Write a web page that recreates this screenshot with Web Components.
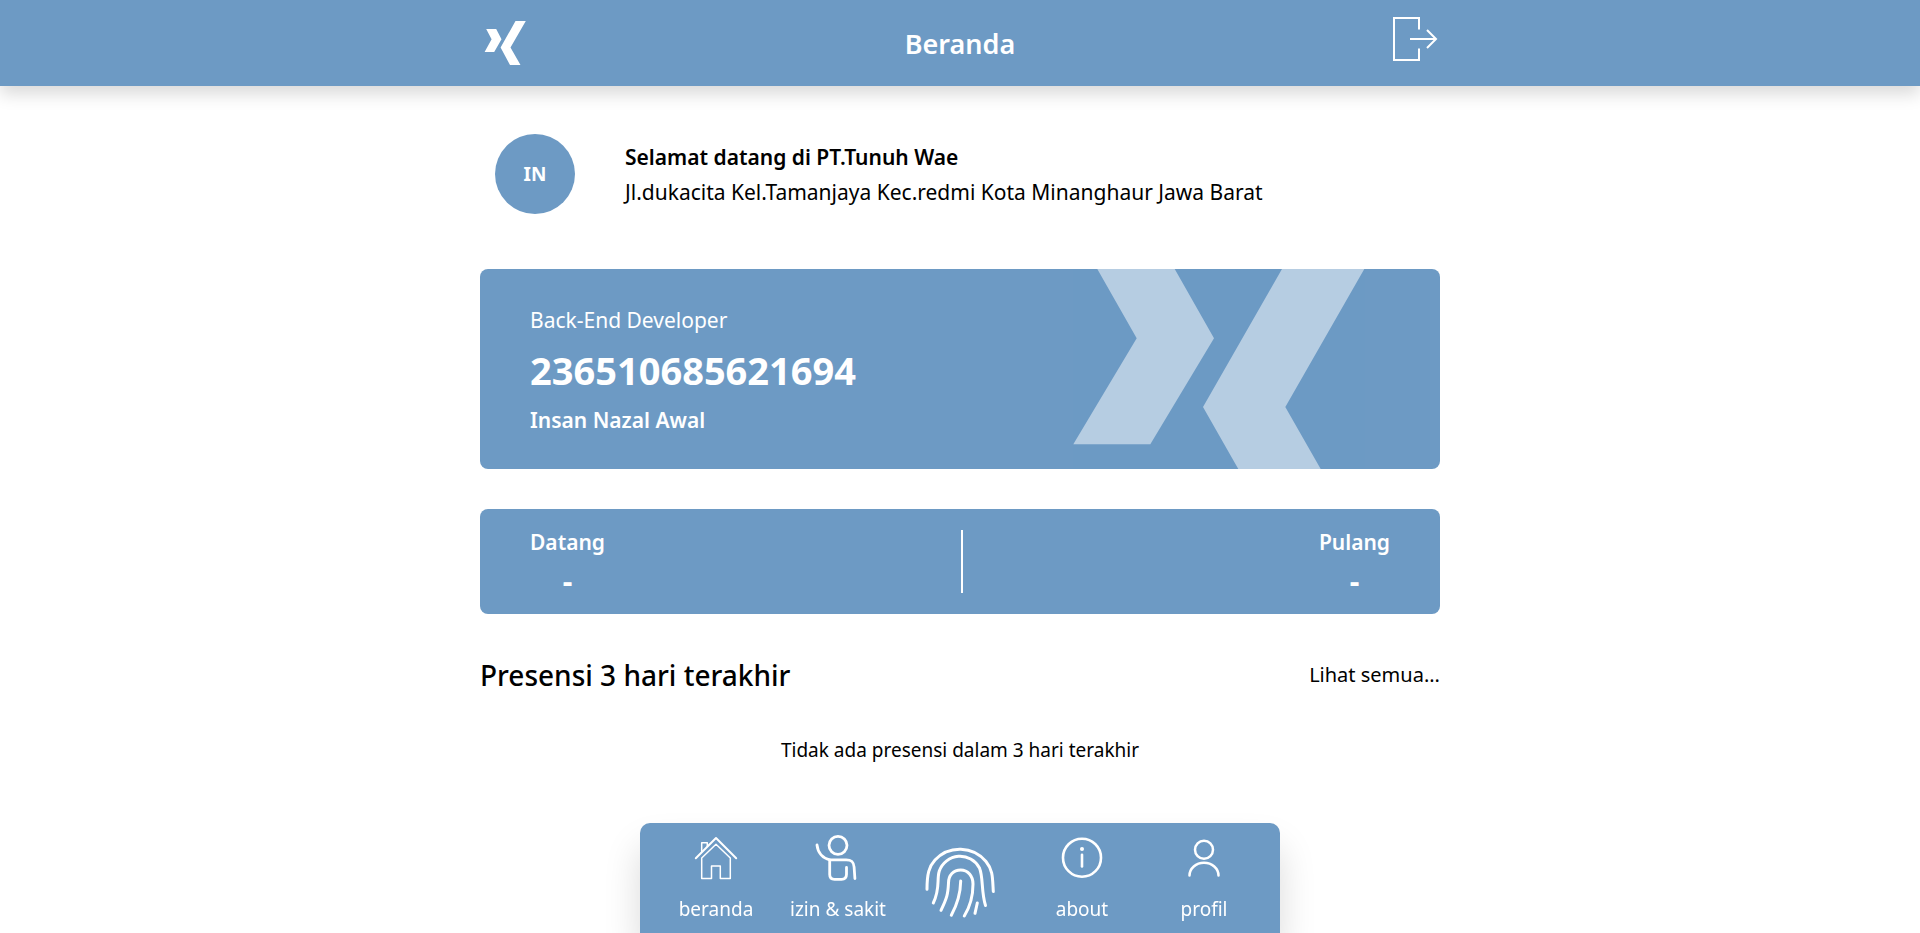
<!DOCTYPE html>
<html lang="id">
<head>
<meta charset="utf-8">
<meta name="viewport" content="width=device-width, initial-scale=1">
<title>Beranda</title>
<style>
  :root {
    --brand: #6d9ac4;
    --shadow: 0 8px 16px rgba(0, 0, 0, .15);
    --shadow-large: 0 24px 36px rgba(0, 0, 0, .15);
    --page-width: 960px;
  }
  body {
    margin: 0;
    background: #fff;
    color: #000;
    font: 400 21px/35px "Noto Sans", "Open Sans", sans-serif;
  }
</style>
</head>
<body>
<home-page></home-page>

<script>
const define = (name, html) => {
  const template = document.createElement('template');
  template.innerHTML = html;
  customElements.define(name, class extends HTMLElement {
    constructor() {
      super();
      this.attachShadow({ mode: 'open' }).append(template.content.cloneNode(true));
    }
  });
};

define('brand-mark', `
  <style>
    :host { display: block; }
    svg { display: block; width: 50px; height: 50px; fill: #fff; }
  </style>
  <svg viewBox="0 0 50 50" aria-hidden="true">
    <path d="M6.2 11h10l5.3 10.3L14.2 34H4.6l7-12.7zM35.5 3h10.3L30.5 29.6 40.5 47H30L20.6 29.6z"/>
  </svg>`);

define('app-header', `
  <style>
    :host { display: block; background: var(--brand); box-shadow: var(--shadow); color: #fff; }
    header {
      display: grid; grid-template-columns: 50px 1fr 50px; align-items: center;
      max-width: var(--page-width); margin: 0 auto; padding: 18px 0;
    }
    h1 { margin: 0; padding-top: 2px; font-size: 27px; line-height: 48px; font-weight: 600; text-align: center; }
    button { display: block; border: 0; padding: 0; background: none; color: inherit; cursor: pointer; }
    svg { display: block; width: 50px; height: 50px; overflow: visible; fill: none; stroke: currentColor; stroke-width: 2; }
  </style>
  <header>
    <brand-mark></brand-mark>
    <h1><slot></slot></h1>
    <button type="button" aria-label="Keluar">
      <svg viewBox="0 0 50 50" aria-hidden="true">
        <path d="M29 11.5V0H4v42h25V30.5"/>
        <path d="M20 21h26M37 12l9 9-9 9"/>
      </svg>
    </button>
  </header>`);

define('welcome-banner', `
  <style>
    :host { display: flex; align-items: center; gap: 50px; padding: 0 15px; }
    .avatar {
      flex: none; display: grid; place-items: center; width: 80px; height: 80px;
      border-radius: 50%; background: var(--brand); color: #fff; font-size: 19px; font-weight: 700;
    }
    .text { padding-top: 2px; }
    h2, p { margin: 0; font-size: 21px; line-height: 35px; }
    h2 { font-weight: 600; }
    p { font-weight: 400; }
  </style>
  <div class="avatar"><slot name="initials"></slot></div>
  <div class="text">
    <h2><slot name="title"></slot></h2>
    <p><slot name="address"></slot></p>
  </div>`);

define('employee-card', `
  <style>
    :host {
      display: flex; justify-content: space-between; align-items: center;
      padding: 0 50px; border-radius: 8px; background: var(--brand); color: #fff; overflow: hidden;
    }
    .info { display: grid; gap: 10px; padding-top: 2px; }
    p { margin: 0; line-height: 30px; }
    .id { font-size: 38px; line-height: 50px; font-weight: 700; }
    .name { font-weight: 600; }
    svg { display: block; width: 325px; height: 200px; fill: #fff; opacity: .5; }
  </style>
  <div class="info">
    <p><slot name="role"></slot></p>
    <p class="id"><slot name="id"></slot></p>
    <p class="name"><slot name="name"></slot></p>
  </div>
  <svg viewBox="0 0 325 200" aria-hidden="true">
    <path d="M32.3 0h77.4L149 69.3 85.3 175.3H8.3L71.7 69.3z"/>
    <path d="M217 0h82.3l-79 138 35.4 62h-82.4L138 138z"/>
  </svg>`);

define('attendance-today', `
  <style>
    :host {
      display: flex; justify-content: space-between; align-items: center;
      padding: 12px 50px 13px; border-radius: 8px; background: var(--brand); color: #fff;
      font-weight: 600; text-align: center;
    }
    dl, dt, dd { margin: 0; }
    dl { padding-bottom: 2px; }
    dt { line-height: 42px; }
    dd { font-size: 30px; font-weight: 700; line-height: 36px; }
    hr { width: 2px; height: 63px; margin: 0; border: 0; background: #fff; }
  </style>
  <dl><dt>Datang</dt><dd><slot name="in"></slot></dd></dl>
  <hr>
  <dl><dt>Pulang</dt><dd><slot name="out"></slot></dd></dl>`);

define('recent-attendance', `
  <style>
    :host { display: block; }
    header { display: flex; justify-content: space-between; align-items: center; line-height: 40px; }
    h2 { margin: 0; font-size: 28px; font-weight: 500; }
    a { font-size: 20px; color: inherit; text-decoration: none; }
    p { margin: 41px 0 0; font-size: 19px; line-height: 28px; text-align: center; }
  </style>
  <header>
    <h2>Presensi 3 hari terakhir</h2>
    <a href="#presensi">Lihat semua...</a>
  </header>
  <p><slot></slot></p>`);

define('nav-item', `
  <style>
    :host { display: block; }
    a {
      display: grid; justify-items: center; gap: 12px; color: #fff; text-decoration: none;
      font-size: 19px; line-height: 28px; white-space: nowrap;
    }
    ::slotted(svg) {
      display: block; width: 50px; height: 50px; fill: none; stroke: currentColor;
      stroke-linecap: round; stroke-linejoin: round;
    }
  </style>
  <a href="#"><slot name="icon"></slot><span><slot></slot></span></a>`);

define('bottom-nav', `
  <style>
    :host { position: fixed; left: 0; right: 0; bottom: 0; display: flex; justify-content: center; }
    nav {
      display: grid; grid-template-columns: repeat(5, 1fr); box-sizing: border-box;
      width: 100%; max-width: 640px; padding: 10px 15px; border-radius: 10px 10px 0 0;
      background: var(--brand); box-shadow: var(--shadow-large); color: #fff;
    }
    .scan { display: grid; place-items: end center; }
    .scan svg { display: block; width: 80px; height: 80px; fill: none; stroke: #fff; stroke-width: 3; stroke-linecap: round; }
  </style>
  <nav>
    <nav-item>
      <svg slot="icon" viewBox="0 0 50 50" stroke-width="1.5" aria-hidden="true">
        <path d="M4.8 25.2 25 5l20.2 20.2" stroke-width="2"/>
        <path d="M10.7 25v20.5h9.8V33h8.8v12.5h10V25L25 11.3 10.7 25M10.7 18.5V9.8h5.6v3.4"/>
      </svg>beranda
    </nav-item>
    <nav-item>
      <svg slot="icon" viewBox="0 0 50 50" stroke-width="2.8" aria-hidden="true">
        <circle cx="25" cy="12.3" r="9"/>
        <path d="M4 12c.8 7.4 5.5 13.2 12.7 14.8h16.5c5.5 0 7.5 2.3 7.9 7.2l.8 11.5"/>
        <path d="M16.7 27v14.5q0 4.8 4.8 4.8h7q5 0 5-5V34.5"/>
      </svg>izin &amp; sakit
    </nav-item>
    <a class="scan" href="#scan" aria-label="Presensi sidik jari">
      <svg viewBox="0 1 80 80" aria-hidden="true">
        <path d="M7 47.3C7 32 9 24.5 15 18A34 34 0 0 1 66 19.5C73 28 72.5 36 73.3 49.5"/>
        <path d="M13.3 61C20.5 46 16.5 38 19.3 29A22 22 0 0 1 59.5 26C63.5 36 61 49 65.5 63.5"/>
        <path d="M21 68.3C27 56 28 52 28.5 41 28.5 33 33.5 28 40.7 28S53 34 53 42C53 53 50.5 64 44.3 74"/>
        <path d="M40.7 39C40.5 51 38 61 31.3 73.3M57.3 61 55 71.3"/>
      </svg>
    </a>
    <nav-item>
      <svg slot="icon" viewBox="0 0 50 50" stroke-width="2.6" aria-hidden="true">
        <circle cx="25" cy="24.7" r="19"/>
        <path d="M25 21.8v11.6"/>
        <circle cx="25" cy="16" r="2" fill="currentColor" stroke="none"/>
      </svg>about
    </nav-item>
    <nav-item>
      <svg slot="icon" viewBox="0 0 50 50" stroke-width="2.5" aria-hidden="true">
        <circle cx="25" cy="16.7" r="9"/>
        <path d="M10.5 42.5a14.5 12.8 0 0 1 29 0"/>
      </svg>profil
    </nav-item>
  </nav>`);

define('home-page', `
  <style>
    :host { display: block; }
    main { display: grid; max-width: var(--page-width); margin: 0 auto; padding: 48px 0 140px; }
    employee-card { margin-top: 55px; }
    attendance-today { margin-top: 40px; }
    recent-attendance { margin-top: 41px; }
  </style>
  <app-header>Beranda</app-header>
  <main>
    <welcome-banner>
      <span slot="initials">IN</span>
      <span slot="title">Selamat datang di PT.Tunuh Wae</span>
      <span slot="address">Jl.dukacita Kel.Tamanjaya Kec.redmi Kota Minanghaur Jawa Barat</span>
    </welcome-banner>
    <employee-card>
      <span slot="role">Back-End Developer</span>
      <span slot="id">236510685621694</span>
      <span slot="name">Insan Nazal Awal</span>
    </employee-card>
    <attendance-today><span slot="in">-</span><span slot="out">-</span></attendance-today>
    <recent-attendance>Tidak ada presensi dalam 3 hari terakhir</recent-attendance>
  </main>
  <bottom-nav></bottom-nav>`);
</script>
</body>
</html>
